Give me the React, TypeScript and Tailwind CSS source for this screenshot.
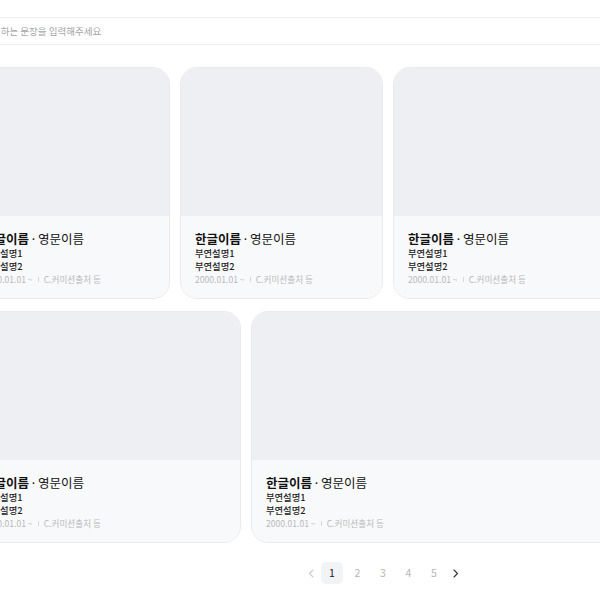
import React from "react";

const FONT = { fontFamily: '"Noto Sans CJK KR", "Noto Sans", sans-serif' };

function Card({ className }: { className: string }) {
  return (
    <div className={`${className} flex flex-col overflow-hidden rounded-[17px] border border-[#e9eaed]`}>
      <div className="h-[148px] bg-[#eeeff2]" />
      <div className="flex flex-col bg-[#f8f9fa] pl-[14px] pt-[15px] pb-[12px]">
        <div className="flex items-center leading-[16px] text-[12.5px] text-[#111]">
          <span className="font-bold">한글이름</span>
          <span className="mx-[1px]">·</span>
          <span>영문이름</span>
        </div>
        <div className="leading-[13px] text-[9.3px] font-medium text-[#222]">부연설명1</div>
        <div className="leading-[13px] text-[9.3px] font-medium text-[#222]">부연설명2</div>
        <div className="flex items-center leading-[13px] text-[8.6px] text-[#b8b9bc]">
          <span>2000.01.01 ~</span>
          <span className="mx-[5px] h-[5px] w-px bg-[#d6d7da]" />
          <span>C.커미션출처 등</span>
        </div>
      </div>
    </div>
  );
}

export default function App() {
  return (
    <div className="h-[600px] w-[600px] overflow-hidden bg-white" style={FONT}>
      <div className="ml-[-32px] flex w-[830px] flex-col pt-[17px]">
        <div className="flex h-[28px] items-center rounded-[4px] border border-[#efeff1] pl-[23px] text-[9.5px] text-[#a3a4a8]">
          원하는 문장을 입력해주세요
        </div>
        <div className="mt-[22px] flex flex-col gap-[12px]">
          <div className="flex gap-[10px]">
            <Card className="w-[202px] shrink-0" />
            <Card className="w-[203px] shrink-0" />
            <Card className="flex-1" />
          </div>
          <div className="flex gap-[10px]">
            <Card className="w-[273px] shrink-0" />
            <Card className="flex-1" />
          </div>
        </div>
        <div className="mt-[19px] flex items-center justify-center gap-[3.5px] text-[10.5px]">
          <div className="flex h-[22px] w-[14px] items-center justify-center">
            <svg width="6" height="9" viewBox="0 0 6 9" fill="none">
              <path d="M5 1 L1.5 4.5 L5 8" stroke="#c9cacd" strokeWidth="1.1" strokeLinecap="round" strokeLinejoin="round" />
            </svg>
          </div>
          <div className="flex h-[22px] w-[22px] items-center justify-center rounded-[5px] bg-[#f2f3f5] text-[#1a1a1a]">1</div>
          <div className="flex h-[22px] w-[22px] items-center justify-center text-[#b4b5b8]">2</div>
          <div className="flex h-[22px] w-[22px] items-center justify-center text-[#b4b5b8]">3</div>
          <div className="flex h-[22px] w-[22px] items-center justify-center text-[#b4b5b8]">4</div>
          <div className="flex h-[22px] w-[22px] items-center justify-center text-[#b4b5b8]">5</div>
          <div className="flex h-[22px] w-[14px] items-center justify-center">
            <svg width="6" height="9" viewBox="0 0 6 9" fill="none">
              <path d="M1 1 L4.5 4.5 L1 8" stroke="#333" strokeWidth="1.1" strokeLinecap="round" strokeLinejoin="round" />
            </svg>
          </div>
        </div>
      </div>
    </div>
  );
}
